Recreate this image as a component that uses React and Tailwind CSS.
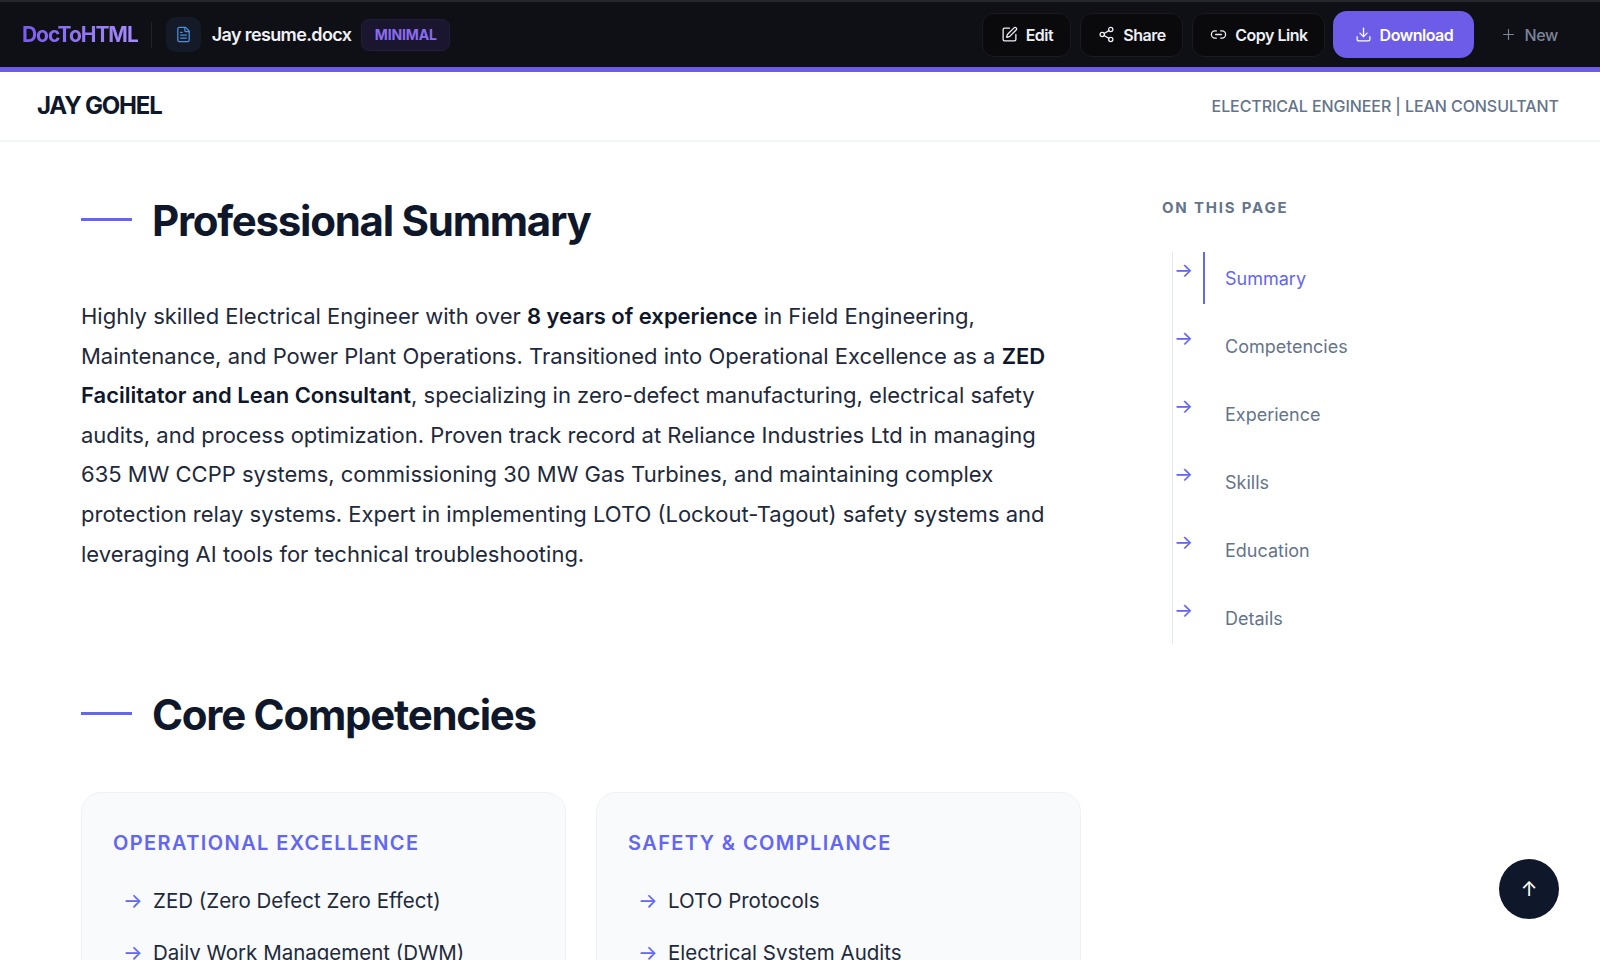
import React from "react";
import { FileText, SquarePen, Share2, Link2, Download, Plus } from "lucide-react";

const tocItems = ["Summary", "Competencies", "Experience", "Skills", "Education", "Details"];

const cards = [
  {
    title: "OPERATIONAL EXCELLENCE",
    items: ["ZED (Zero Defect Zero Effect)", "Daily Work Management (DWM)"],
  },
  {
    title: "SAFETY & COMPLIANCE",
    items: ["LOTO Protocols", "Electrical System Audits"],
  },
];

const SectionTitle = ({ children }) => (
  <div className="flex items-center gap-[20px]">
    <div className="h-[3px] w-[51px] -translate-y-[2px] bg-[#6366f1]" />
    <h2 className="text-[42px] leading-[52px] font-bold tracking-[-0.03em] text-[#0f172a]">{children}</h2>
  </div>
);

const ToolButton = ({ icon: Icon, label, width }) => (
  <button className={`flex h-[44px] items-center justify-center gap-[8px] rounded-[12px] border border-[#1a1a20] bg-[#0a0a0d] text-[16px] font-semibold tracking-[-0.03em] text-[#eef0f6] ${width}`}>
    <Icon size={17} strokeWidth={1.8} />
    {label}
  </button>
);

const Header = () => (
  <div className="flex h-[72px] shrink-0 items-center justify-between border-t-2 border-b-[5px] border-t-[#26272b] border-b-[#6c5ce7] bg-[#0f1016] pr-[42px] pl-[22px]">
    <div className="flex items-center">
      <span className="bg-gradient-to-r from-[#7c5cf0] to-[#a78bfa] bg-clip-text text-[21px] font-bold tracking-[-0.05em] text-transparent">
        DocToHTML
      </span>
      <div className="mr-[14px] ml-[13px] h-[26px] w-px bg-[#22232a]" />
      <div className="flex h-[35px] w-[35px] items-center justify-center rounded-[10px] bg-[#141a28] text-[#4a90d9]">
        <FileText size={17} strokeWidth={1.8} />
      </div>
      <span className="ml-[11px] text-[18px] font-semibold tracking-[-0.035em] text-[#f1f2f6]">Jay resume.docx</span>
      <span className="ml-[10px] flex h-[32px] w-[89px] items-center justify-center rounded-[8px] border border-[#221d38] bg-[#1a1630] text-[14px] font-bold tracking-[-0.01em] text-[#8b6cf0]">
        MINIMAL
      </span>
    </div>
    <div className="flex items-center">
      <div className="flex items-center gap-[9px]">
        <ToolButton icon={SquarePen} label="Edit" width="w-[89px]" />
        <ToolButton icon={Share2} label="Share" width="w-[103px]" />
        <ToolButton icon={Link2} label="Copy Link" width="w-[133px]" />
      </div>
      <button className="ml-[8px] flex h-[47px] w-[141px] items-center justify-center gap-[8px] rounded-[14px] bg-[#6c5ce7] text-[16px] font-semibold tracking-[-0.03em] text-white">
        <Download size={17} strokeWidth={1.8} />
        Download
      </button>
      <button className="ml-[26px] flex items-center gap-[7px] text-[16px] font-medium tracking-[-0.02em] text-[#7d8499]">
        <Plus size={17} strokeWidth={1.6} />
        New
      </button>
    </div>
  </div>
);

const App = () => {
  return (
    <div className="relative flex h-screen flex-col overflow-hidden bg-white font-['Inter',sans-serif] text-[#0f172a]">
      <Header />
      <div className="flex h-[70px] shrink-0 items-center justify-between border-b-2 border-[#f1f5f9] pr-[41px] pl-[37px]">
        <div className="text-[24px] font-bold tracking-[-0.05em] text-[#0f172a]">JAY GOHEL</div>
        <div className="text-[16px] font-medium tracking-[-0.005em] text-[#64748b]">
          ELECTRICAL ENGINEER | LEAN CONSULTANT
        </div>
      </div>

      <div className="flex min-h-0 flex-1 pl-[81px]">
        <main className="w-[1000px] shrink-0 pt-[53px]">
          <SectionTitle>Professional Summary</SectionTitle>
          <p className="mt-[50px] text-[22px] leading-[39.6px] text-[#1e293b]">
            Highly skilled Electrical Engineer with over <strong className="font-semibold text-[#0f172a]">8 years of experience</strong> in Field Engineering, Maintenance, and Power Plant Operations. Transitioned into Operational Excellence as a <strong className="font-semibold text-[#0f172a]">ZED Facilitator and Lean Consultant</strong>, specializing in zero-defect manufacturing, electrical safety audits, and process optimization. Proven track record at Reliance Industries Ltd in managing 635 MW CCPP systems, commissioning 30 MW Gas Turbines, and maintaining complex protection relay systems. Expert in implementing LOTO (Lockout-Tagout) safety systems and leveraging AI tools for technical troubleshooting.
          </p>

          <div className="mt-[115px]">
            <SectionTitle>Core Competencies</SectionTitle>
          </div>

          <div className="mt-[51px] grid grid-cols-2 gap-[30px]">
            {cards.map((card) => (
              <div key={card.title} className="h-[300px] rounded-[20px] border border-[#eef2f7] bg-[#f8fafc] px-[31px] pt-[36px]">
                <h3 className="text-[20px] leading-[28px] font-semibold tracking-[0.07em] text-[#6366f1]">{card.title}</h3>
                <ul className="mt-[26px] flex flex-col gap-[16px]">
                  {card.items.map((item) => (
                    <li key={item} className="flex items-center pl-[10px] text-[20.5px] leading-[36px] text-[#1e293b]">
                      <span className="w-[30px] shrink-0 text-[#6366f1]">→</span>
                      {item}
                    </li>
                  ))}
                </ul>
              </div>
            ))}
          </div>
        </main>

        <aside className="ml-[81px] w-[300px] pt-[56px]">
          <div className="text-[15px] leading-[20px] font-bold tracking-[0.12em] text-[#64748b]">ON THIS PAGE</div>
          <ul className="mt-[34px] ml-[10px] flex flex-col gap-[16px] border-l border-[#e2e8f0]">
            {tocItems.map((item, i) => (
              <li key={item} className="flex h-[52px]">
                <span className="w-[30px] shrink-0 pl-[1px] text-[20px] leading-[36px] text-[#6366f1]">→</span>
                <a className={`flex items-center border-l-2 pl-[20px] text-[18px] ${i === 0 ? "border-[#6366f1] text-[#6366f1]" : "border-transparent text-[#64748b]"}`}>
                  {item}
                </a>
              </li>
            ))}
          </ul>
        </aside>
      </div>

      <button className="absolute right-[41px] bottom-[41px] flex h-[60px] w-[60px] items-center justify-center rounded-full bg-[#0f172a] text-[20px] text-white">
        ↑
      </button>
    </div>
  );
};

export default App;
